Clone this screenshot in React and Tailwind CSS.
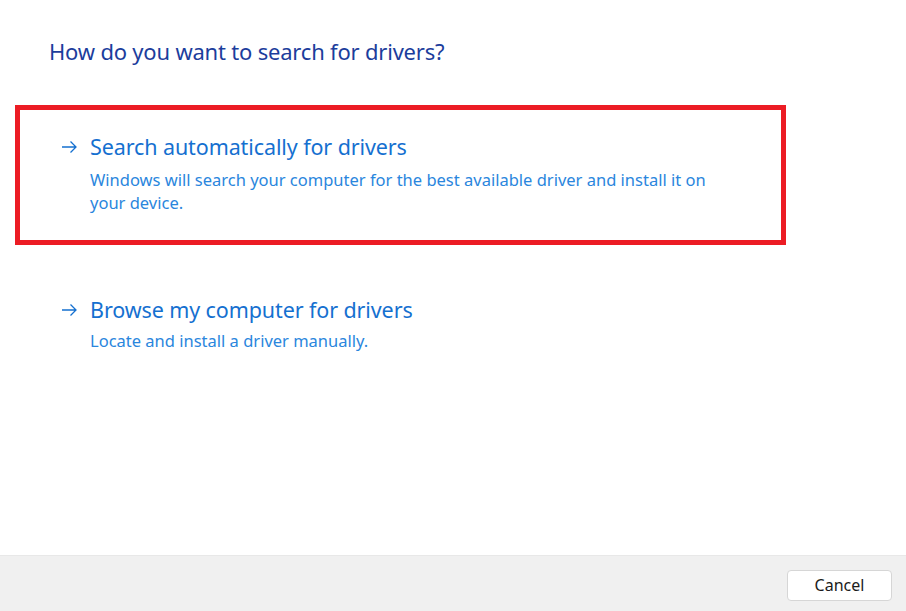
export default function App() {
  const font = { fontFamily: '"Noto Sans", "Open Sans", sans-serif' };

  return (
    <div className="w-[906px] h-[611px] bg-white flex flex-col" style={font}>
      <div className="flex-1 flex flex-col pt-[36px]">
        <h1 className="pl-[49px] text-[22px] leading-[30px] text-[#1c3d9c] tracking-[-0.2px]">
          How do you want to search for drivers?
        </h1>

        <div className="ml-[15px] mt-[39px] w-[771px] h-[140px] border-[5px] border-[#ec1c24] flex items-start pt-[23px] pl-[40px]">
          <Arrow />
          <div className="ml-[10px]">
            <div className="text-[21.5px] leading-[28px] text-[#1570d0] tracking-[-0.1px]">Search automatically for drivers</div>
            <div className="mt-[7px] text-[16.5px] leading-[23px] text-[#2a86dd] w-[630px]">
              Windows will search your computer for the best available driver and install it on your device.
            </div>
          </div>
        </div>

        <div className="mt-[51px] flex items-start pl-[60px]">
          <Arrow />
          <div className="ml-[10px]">
            <div className="text-[21.5px] leading-[28px] text-[#1570d0] tracking-[-0.1px]">Browse my computer for drivers</div>
            <div className="mt-[5px] text-[16.5px] leading-[23px] text-[#2a86dd]">
              Locate and install a driver manually.
            </div>
          </div>
        </div>
      </div>

      <div className="h-[56px] bg-[#f0f0f0] border-t border-[#e8e8e8] flex items-center justify-end pr-[14px] pt-[3px]">
        <button className="w-[105px] h-[31px] bg-white border border-[#d6d6d6] rounded-[4px] text-[16px] text-[#1b1b1b]">
          Cancel
        </button>
      </div>
    </div>
  );
}

function Arrow() {
  return (
    <svg width="20" height="28" viewBox="0 0 20 28" className="shrink-0">
      <path d="M2 14h14M10.5 8.5L16 14l-5.5 5.5" fill="none" stroke="#1570d0" strokeWidth="1.3" />
    </svg>
  );
}
